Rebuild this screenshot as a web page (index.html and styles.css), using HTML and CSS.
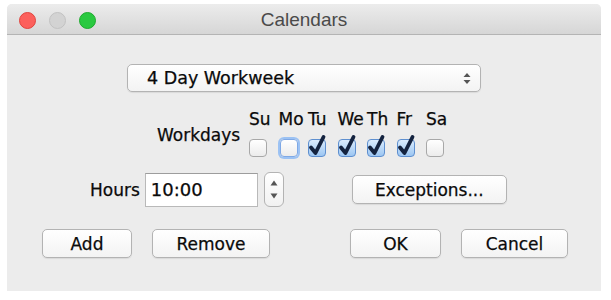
FILE: index.html
```html
<!DOCTYPE html>
<html lang="en">
<head>
  <meta charset="UTF-8">
  <title>Calendars</title>
  <link rel="stylesheet" href="styles.css">
</head>
<body>
  <div class="window">
    <!-- Title bar -->
    <div class="titlebar">
      <div class="lights">
        <span class="light close"></span>
        <span class="light mini"></span>
        <span class="light zoom"></span>
      </div>
      <div class="title">Calendars</div>
      <div></div>
    </div>

    <div class="content">
      <!-- Calendar picker -->
      <div class="popup-row">
        <div class="popup">
          <span>4 Day Workweek</span>
          <svg class="popup-arrows" width="8" height="13" viewBox="0 0 8 13">
            <path d="M0.5 5 L4 1 L7.5 5 Z M0.5 8 L4 12 L7.5 8 Z" fill="#555"/>
          </svg>
        </div>
      </div>

      <!-- Workdays -->
      <div class="workdays">
        <div class="workdays-label">Workdays</div>
        <span class="day">Su</span>
        <span class="day">Mo</span>
        <span class="day">Tu</span>
        <span class="day">We</span>
        <span class="day">Th</span>
        <span class="day">Fr</span>
        <span class="day">Sa</span>
        <span class="check"></span>
        <span class="check focus"></span>
        <span class="check on"><svg viewBox="0 0 18 18"><path d="M3 8.5 L7.5 14 L15.5 -2"/></svg></span>
        <span class="check on"><svg viewBox="0 0 18 18"><path d="M3 8.5 L7.5 14 L15.5 -2"/></svg></span>
        <span class="check on"><svg viewBox="0 0 18 18"><path d="M3 8.5 L7.5 14 L15.5 -2"/></svg></span>
        <span class="check on"><svg viewBox="0 0 18 18"><path d="M3 8.5 L7.5 14 L15.5 -2"/></svg></span>
        <span class="check"></span>
      </div>

      <!-- Hours -->
      <div class="hours-row">
        <label class="hours-label" for="hours">Hours</label>
        <input class="field" id="hours" type="text" value="10:00">
        <div class="stepper">
          <svg width="8" height="6" viewBox="0 0 8 6"><path d="M0.5 5.5 L4 0.5 L7.5 5.5 Z" fill="#555"/></svg>
          <svg width="8" height="6" viewBox="0 0 8 6"><path d="M0.5 0.5 L4 5.5 L7.5 0.5 Z" fill="#555"/></svg>
        </div>
        <button class="btn exceptions">Exceptions...</button>
      </div>

      <!-- Buttons -->
      <div class="button-row">
        <div class="btn-group">
          <button class="btn add">Add</button>
          <button class="btn remove">Remove</button>
        </div>
        <div class="btn-group">
          <button class="btn ok">OK</button>
          <button class="btn cancel">Cancel</button>
        </div>
      </div>
    </div>
  </div>
</body>
</html>
```

FILE: styles.css
```css
body {
  margin: 0;
  background: #fff;
  font-family: "DejaVu Sans", sans-serif;
  font-size: 17px;
  color: #0a0a0a;
}
.window {
  margin: 4px 0 0 7px;
  width: 594px;
  height: 287px;
  background: #ececec;
  border-radius: 5px 5px 0 0;
  overflow: hidden;
}
.titlebar {
  height: 30px;
  border-bottom: 1px solid #b4b4b4;
  background: linear-gradient(#ececec, #d6d6d6);
  display: grid;
  grid-template-columns: 1fr auto 1fr;
  align-items: center;
}
.lights {
  display: flex;
  gap: 13px;
  padding-left: 12px;
  padding-top: 2px;
}
.light {
  width: 17px;
  height: 17px;
  border-radius: 50%;
  box-sizing: border-box;
}
.light.close {
  background: #fc605c;
  border: 1px solid #e0443e;
}
.light.mini {
  background: #d3d3d3;
  border: 1px solid #c2c2c2;
}
.light.zoom {
  background: #2ac940;
  border: 1px solid #1eaa2e;
}
.title {
  font-family: "Liberation Sans", Arial, sans-serif;
  font-size: 19px;
  color: #4a4a4a;
  padding-top: 2px;
}
.content {
  padding-top: 29px;
  -webkit-text-stroke: 0.25px #0a0a0a;
}
.popup-row {
  padding-left: 120px;
}
.popup {
  width: 354px;
  height: 28px;
  box-sizing: border-box;
  display: flex;
  align-items: center;
  justify-content: space-between;
  padding: 0 9px 0 19px;
  font-size: 17.5px;
  background: linear-gradient(#fff, #f3f3f3);
  border: 1px solid #b3b3b3;
  border-radius: 5px;
  box-shadow: 0 1px 1px rgba(0, 0, 0, 0.08);
}
.workdays {
  margin-top: 17px;
  padding-left: 150px;
  display: grid;
  grid-template-columns: 92px repeat(7, 29.5px);
  grid-template-rows: 20px 18px;
  row-gap: 10px;
}
.workdays-label {
  grid-row: 1 / 3;
  align-self: center;
  padding-top: 4px;
  line-height: 20px;
}
.day {
  line-height: 20px;
}
.check {
  width: 18px;
  height: 18px;
  box-sizing: border-box;
  border: 1px solid #a8a8a8;
  border-radius: 4px;
  background: linear-gradient(#fff, #ececec);
}
.check.focus {
  border-color: #7fa9e6;
  box-shadow: 0 0 0 2px rgba(130, 180, 245, 0.75);
  margin-left: 1px;
}
.check.on {
  border-color: #5e8fcf;
  background: linear-gradient(#dbecfd, #9cc6f2);
}
.check svg {
  width: 18px;
  height: 18px;
  overflow: visible;
  display: block;
  margin: -1px 0 0 -1px;
}
.check path {
  fill: none;
  stroke: #14233f;
  stroke-width: 3.8;
  stroke-linecap: round;
  stroke-linejoin: round;
}
.hours-row {
  margin-top: 15px;
  padding-left: 83px;
  display: flex;
  align-items: center;
}
.hours-label {
  margin-right: 5px;
}
.field {
  width: 113px;
  height: 34px;
  box-sizing: border-box;
  border: 1px solid #b9b9b9;
  border-top-color: #9d9d9d;
  background: #fff;
  padding: 0 0 0 5px;
  font-family: "DejaVu Sans", sans-serif;
  font-size: 18px;
  color: #0a0a0a;
  -webkit-text-stroke: 0.25px #0a0a0a;
  outline: none;
}
.stepper {
  margin-left: 6px;
  width: 20px;
  height: 35px;
  box-sizing: border-box;
  border: 1px solid #b3b3b3;
  border-radius: 6px;
  background: linear-gradient(#fff, #f1f1f1);
  display: flex;
  flex-direction: column;
  align-items: center;
  justify-content: center;
  gap: 7px;
}
.btn {
  height: 29px;
  box-sizing: border-box;
  background: linear-gradient(#fff, #f3f3f3);
  border: 1px solid #b3b3b3;
  border-radius: 5px;
  box-shadow: 0 1px 1px rgba(0, 0, 0, 0.08);
  font-family: "DejaVu Sans", sans-serif;
  font-size: 17px;
  color: #0a0a0a;
  -webkit-text-stroke: 0.25px #0a0a0a;
  padding: 0;
}
.exceptions {
  width: 155px;
  margin-left: 68px;
}
.button-row {
  margin-top: 22px;
  padding: 0 33px 0 35px;
  display: flex;
  justify-content: space-between;
}
.btn-group {
  display: flex;
  gap: 20px;
}
.add { width: 90px; }
.remove { width: 118px; }
.ok { width: 91px; }
.cancel { width: 107px; }
```
